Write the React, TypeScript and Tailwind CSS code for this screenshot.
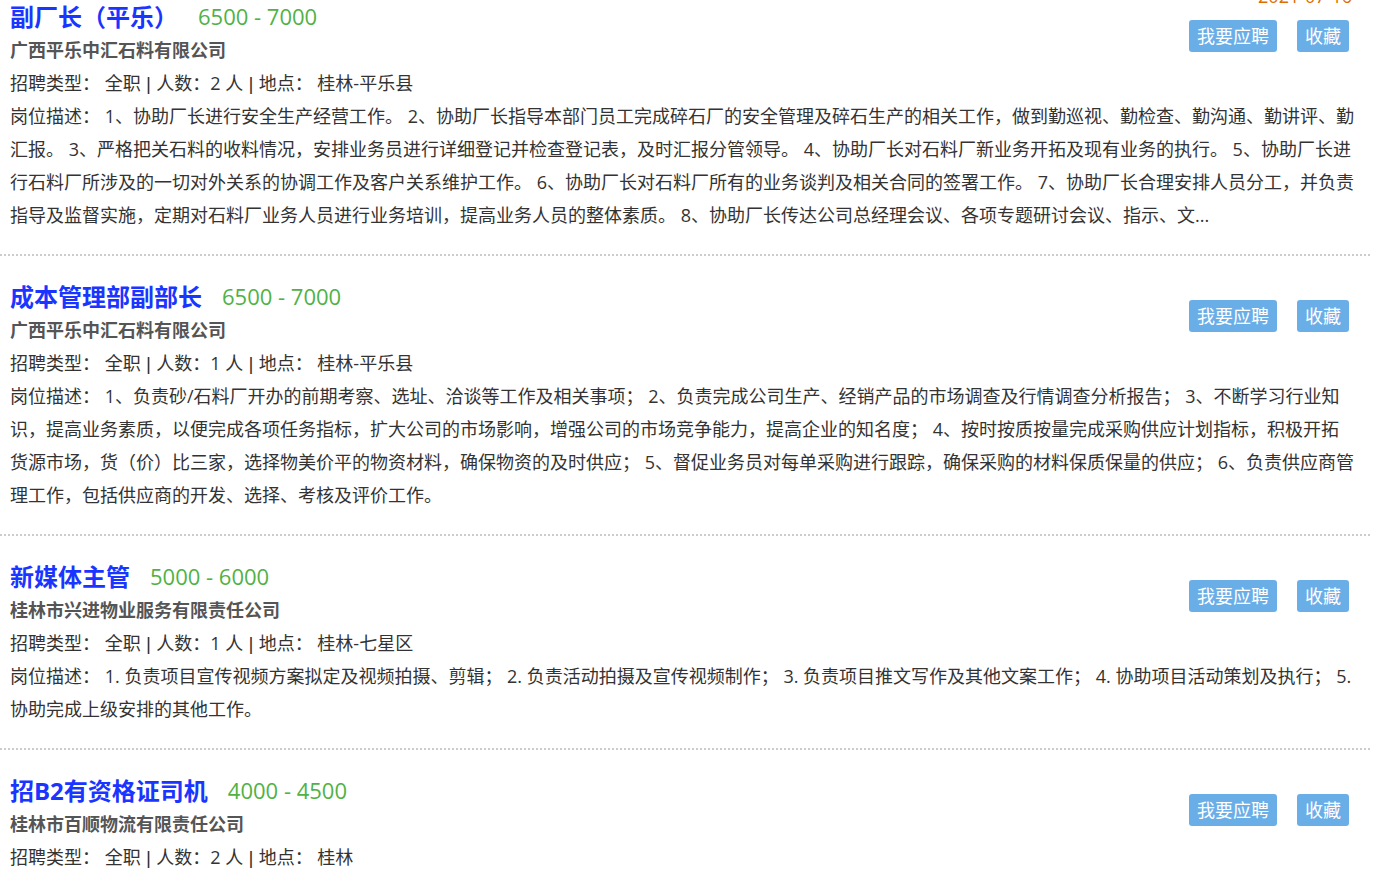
import React from 'react';

type Job = {
  title: string;
  salary: string;
  company: string;
  type: string;
  count: number;
  place: string;
  desc: string;
  date?: string;
};

const jobs: Job[] = [
  {
    title: '副厂长（平乐）',
    salary: '6500 - 7000',
    company: '广西平乐中汇石料有限公司',
    type: '全职',
    count: 2,
    place: '桂林-平乐县',
    date: '2021-07-16',
    desc: '1、协助厂长进行安全生产经营工作。 2、协助厂长指导本部门员工完成碎石厂的安全管理及碎石生产的相关工作，做到勤巡视、勤检查、勤沟通、勤讲评、勤汇报。 3、严格把关石料的收料情况，安排业务员进行详细登记并检查登记表，及时汇报分管领导。 4、协助厂长对石料厂新业务开拓及现有业务的执行。 5、协助厂长进行石料厂所涉及的一切对外关系的协调工作及客户关系维护工作。 6、协助厂长对石料厂所有的业务谈判及相关合同的签署工作。 7、协助厂长合理安排人员分工，并负责指导及监督实施，定期对石料厂业务人员进行业务培训，提高业务人员的整体素质。 8、协助厂长传达公司总经理会议、各项专题研讨会议、指示、文...',
  },
  {
    title: '成本管理部副部长',
    salary: '6500 - 7000',
    company: '广西平乐中汇石料有限公司',
    type: '全职',
    count: 1,
    place: '桂林-平乐县',
    desc: '1、负责砂/石料厂开办的前期考察、选址、洽谈等工作及相关事项； 2、负责完成公司生产、经销产品的市场调查及行情调查分析报告； 3、不断学习行业知识，提高业务素质，以便完成各项任务指标，扩大公司的市场影响，增强公司的市场竞争能力，提高企业的知名度； 4、按时按质按量完成采购供应计划指标，积极开拓货源市场，货（价）比三家，选择物美价平的物资材料，确保物资的及时供应； 5、督促业务员对每单采购进行跟踪，确保采购的材料保质保量的供应； 6、负责供应商管理工作，包括供应商的开发、选择、考核及评价工作。',
  },
  {
    title: '新媒体主管',
    salary: '5000 - 6000',
    company: '桂林市兴进物业服务有限责任公司',
    type: '全职',
    count: 1,
    place: '桂林-七星区',
    desc: '1. 负责项目宣传视频方案拟定及视频拍摄、剪辑； 2. 负责活动拍摄及宣传视频制作； 3. 负责项目推文写作及其他文案工作； 4. 协助项目活动策划及执行； 5. 协助完成上级安排的其他工作。',
  },
  {
    title: '招B2有资格证司机',
    salary: '4000 - 4500',
    company: '桂林市百顺物流有限责任公司',
    type: '全职',
    count: 2,
    place: '桂林',
    desc: '1、持B2及以上驾驶证，驾龄三年以上，熟悉桂林市区及周边路线； 2、服从公司安排，按时完成运输任务。',
  },
];

const Pipe = () => <span className="font-['Liberation_Sans'] text-[19px]"> | </span>;

const JobItem: React.FC<{ job: Job }> = ({ job }) => (
  <li className="relative pl-[10px] pr-[14px] pt-[23px] pb-[22px] border-b-2 border-dotted border-[#cccccc]">
    {job.date && (
      <span className="absolute top-[10px] right-[18px] text-[18px] leading-[20px] text-[#e06c00]">{job.date}</span>
    )}
    <div className="absolute top-[44px] right-[21px] flex gap-5">
      <button className="h-8 px-2 rounded-[3px] bg-[#6aaee8] text-white text-[18px] leading-8">我要应聘</button>
      <button className="h-8 px-2 rounded-[3px] bg-[#6aaee8] text-white text-[18px] leading-8">收藏</button>
    </div>
    <div className="flex items-center h-[35px]">
      <h3 className="text-[24px] font-bold text-[#1a35ff] leading-[35px]">{job.title}</h3>
      <span className="ml-5 text-[22px] text-[#4fb245] leading-[35px]">{job.salary}</span>
    </div>
    <p className="text-[18px] font-bold text-[#555555] leading-[33px]">{job.company}</p>
    <p className="text-[18px] text-[#333333] leading-[33px]">
      招聘类型： {job.type}
      <Pipe />
      人数：{job.count} 人
      <Pipe />
      地点： {job.place}
    </p>
    <p className="text-[18px] text-[#333333] leading-[33px]">
      岗位描述： {job.desc}
    </p>
  </li>
);

const App: React.FC = () => {
  return (
    <div
      className="h-screen overflow-hidden bg-white"
      style={{ fontFamily: '"Open Sans", "Noto Sans CJK SC", sans-serif' }}
    >
      <ul className="w-[1370px] -mt-6">
        {jobs.map((job) => (
          <JobItem key={job.title} job={job} />
        ))}
      </ul>
    </div>
  );
};

export default App;
